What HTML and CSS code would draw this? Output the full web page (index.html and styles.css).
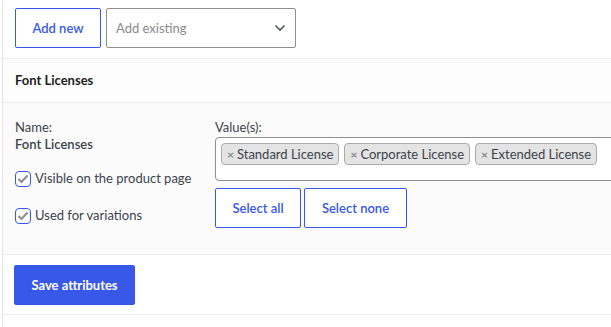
FILE: index.html
```html
<!DOCTYPE html>
<html lang="en">
<head>
<meta charset="utf-8">
<title>Attributes</title>
<link rel="stylesheet" href="styles.css">
</head>
<body>
<div class="panel">
  <div class="toolbar">
    <button class="btn btn-outline btn-add">Add new</button>
    <div class="select">
      <span class="placeholder">Add existing</span>
      <svg class="chevron" width="12" height="8" viewBox="0 0 12 8"><path d="M1.5 1.5 L6 6 L10.5 1.5" fill="none" stroke="#50575e" stroke-width="1.6"/></svg>
    </div>
  </div>
  <div class="attr-head">Font Licenses</div>
  <div class="attr-body">
    <div class="col-left">
      <div class="label">Name:</div>
      <div class="name">Font Licenses</div>
      <label class="check check-first"><span class="box"><svg width="12" height="10" viewBox="0 0 12 10"><path d="M1.5 5 L4.5 8 L10.5 1.5" fill="none" stroke="#8c8f94" stroke-width="2.2"/></svg></span>Visible on the product page</label>
      <label class="check"><span class="box"><svg width="12" height="10" viewBox="0 0 12 10"><path d="M1.5 5 L4.5 8 L10.5 1.5" fill="none" stroke="#8c8f94" stroke-width="2.2"/></svg></span>Used for variations</label>
    </div>
    <div class="col-right">
      <div class="label">Value(s):</div>
      <div class="multi">
        <span class="chip"><span class="x">×</span>Standard License</span>
        <span class="chip"><span class="x">×</span>Corporate License</span>
        <span class="chip"><span class="x">×</span>Extended License</span>
      </div>
      <div class="actions">
        <button class="btn btn-outline btn-all">Select all</button>
        <button class="btn btn-outline btn-none">Select none</button>
      </div>
    </div>
  </div>
  <div class="save-row">
    <button class="btn btn-primary">Save attributes</button>
  </div>
</div>
</body>
</html>
```
FILE: styles.css
```css
html, body {
  margin: 0;
  padding: 0;
  background: #fff;
}
body {
  font-family: Lato, "Noto Sans", sans-serif;
  font-size: 13px;
  line-height: 17px;
  color: #1e1e1e;
}
.panel {
  margin-left: 2px;
  border-left: 1px solid #e5e5e5;
  min-height: 327px;
  overflow: hidden;
}
.toolbar {
  display: flex;
  gap: 5px;
  padding: 8px 0 10px 12px;
  border-bottom: 1px solid #ececec;
}
.btn {
  font-family: inherit;
  font-size: 13px;
  height: 40px;
  border-radius: 2px;
  cursor: pointer;
  padding: 0;
}
.btn-outline {
  background: #fff;
  border: 1px solid #3858e9;
  color: #3858e9;
  font-weight: 600;
}
.btn-add { width: 86px; }
.select {
  width: 190px;
  height: 40px;
  box-sizing: border-box;
  border: 1px solid #8c8f94;
  border-radius: 2px;
  display: flex;
  align-items: center;
  justify-content: space-between;
  padding: 0 9px 0 9px;
}
.placeholder { color: #8a8a8a; }
.attr-head {
  height: 43px;
  display: flex;
  align-items: center;
  padding-left: 12px;
  font-weight: 700;
  background: #fdfdfd;
  border-bottom: 1px solid #ececec;
}
.attr-body {
  display: grid;
  grid-template-columns: 200px 1fr;
  padding: 16px 0 26px 12px;
  background: #fbfbfb;
  border-bottom: 1px solid #ececec;
}
.label { color: #3c434a; }
.name { font-weight: 600; color: #3c434a; }
.check {
  display: flex;
  align-items: center;
  gap: 4px;
  color: #3c434a;
  margin-top: 20px;
  height: 17px;
}
.check-first { margin-top: 17px; }
.box {
  width: 16px;
  height: 16px;
  box-sizing: border-box;
  border: 1px solid #3858e9;
  border-radius: 4px;
  background: #fff;
  display: flex;
  align-items: center;
  justify-content: center;
}
.multi {
  margin-top: 1px;
  width: 420px;
  height: 44px;
  box-sizing: border-box;
  border: 1px solid #8c8f94;
  border-radius: 4px;
  background: #fff;
  padding: 5px 0 0 5px;
  display: flex;
  align-items: flex-start;
  gap: 5px;
}
.chip {
  height: 22px;
  box-sizing: border-box;
  background: #e4e4e4;
  border: 1px solid #aaa;
  border-radius: 4px;
  display: flex;
  align-items: center;
  padding: 0 5px 0 5px;
  color: #3c434a;
  white-space: nowrap;
}
.x {
  color: #888;
  font-weight: 700;
  margin-right: 3px;
  font-size: 12px;
}
.actions {
  display: flex;
  gap: 3px;
  margin-top: 7px;
}
.btn-all { width: 86px; }
.btn-none { width: 103px; }
.save-row {
  padding: 10px 0 9px 11px;
  border-bottom: 1px solid #ececec;
}
.btn-primary {
  width: 121px;
  background: #3858e9;
  border: 1px solid #3858e9;
  color: #fff;
  font-weight: 700;
}
```
